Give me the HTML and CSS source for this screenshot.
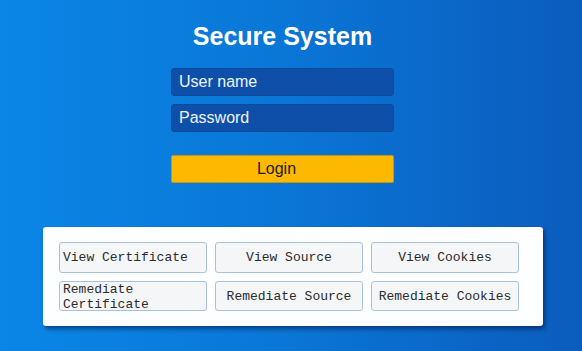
FILE: index.html
```html
<!DOCTYPE html>
<html lang="en">
<head>
  <meta charset="UTF-8">
  <title>Secure System</title>
  <link rel="stylesheet" href="styles.css">
</head>
<body>
  <div class="login-box">
    <h1 class="title">Secure System</h1>
    <input class="field" type="text" placeholder="User name">
    <input class="field" type="password" placeholder="Password">
    <button class="login-button">Login</button>
  </div>

  <div class="tools-panel">
    <button class="tool-button left">View Certificate</button>
    <button class="tool-button">View Source</button>
    <button class="tool-button">View Cookies</button>
    <button class="tool-button left">Remediate Certificate</button>
    <button class="tool-button">Remediate Source</button>
    <button class="tool-button">Remediate Cookies</button>
  </div>
</body>
</html>
```

FILE: styles.css
```css
body {
  margin: 0;
  padding: 0;
  height: 351px;
  background: linear-gradient(90deg, #0a86e7 0%, #0a78d8 45%, #0b5cbd 100%);
  font-family: 'Liberation Sans', Arial, sans-serif;
  overflow: hidden;
}

.login-box {
  width: 223px;
  margin-left: 171px;
  padding-top: 21px;
  display: flex;
  flex-direction: column;
}

.title {
  margin: 0 0 17px 0;
  color: #fff;
  font-size: 25px;
  line-height: 30px;
  text-align: center;
  font-weight: 700;
}

.field {
  height: 28px;
  margin: 0 0 8px 0;
  padding: 0 7px;
  box-sizing: border-box;
  background: #0e50a9;
  border: 1px solid #0c4a9c;
  border-radius: 3px;
  color: #fff;
  font-family: 'Liberation Sans', Arial, sans-serif;
  font-size: 16px;
}

.field::placeholder {
  color: #eef4fc;
}

.login-button {
  height: 28px;
  margin-top: 15px;
  background: #fdb900;
  border: 1px solid #c8960a;
  border-radius: 2px;
  color: #1d1a10;
  font-family: 'Liberation Sans', Arial, sans-serif;
  font-size: 16px;
  padding: 0 12px 0 0;
}

/* lower panel with the tool buttons */
.tools-panel {
  width: 500px;
  box-sizing: border-box;
  margin: 44px 0 0 43px;
  padding: 15px 21px 15px 16px;
  background: #fdfeff;
  border-radius: 3px;
  box-shadow: 2px 3px 4px rgba(0, 20, 60, 0.55);
  display: grid;
  grid-template-columns: repeat(3, 148px);
  grid-template-rows: 31px 30px;
  column-gap: 8px;
  row-gap: 8px;
}

.tool-button {
  margin: 0;
  padding: 0 3px;
  background: #f4f6f8;
  border: 1px solid #a7c3dc;
  border-radius: 3px;
  color: #2b2b2b;
  font-family: 'Liberation Mono', 'Courier New', monospace;
  font-size: 13px;
  line-height: 15px;
  text-align: center;
}

.tool-button.left {
  text-align: left;
}
```
